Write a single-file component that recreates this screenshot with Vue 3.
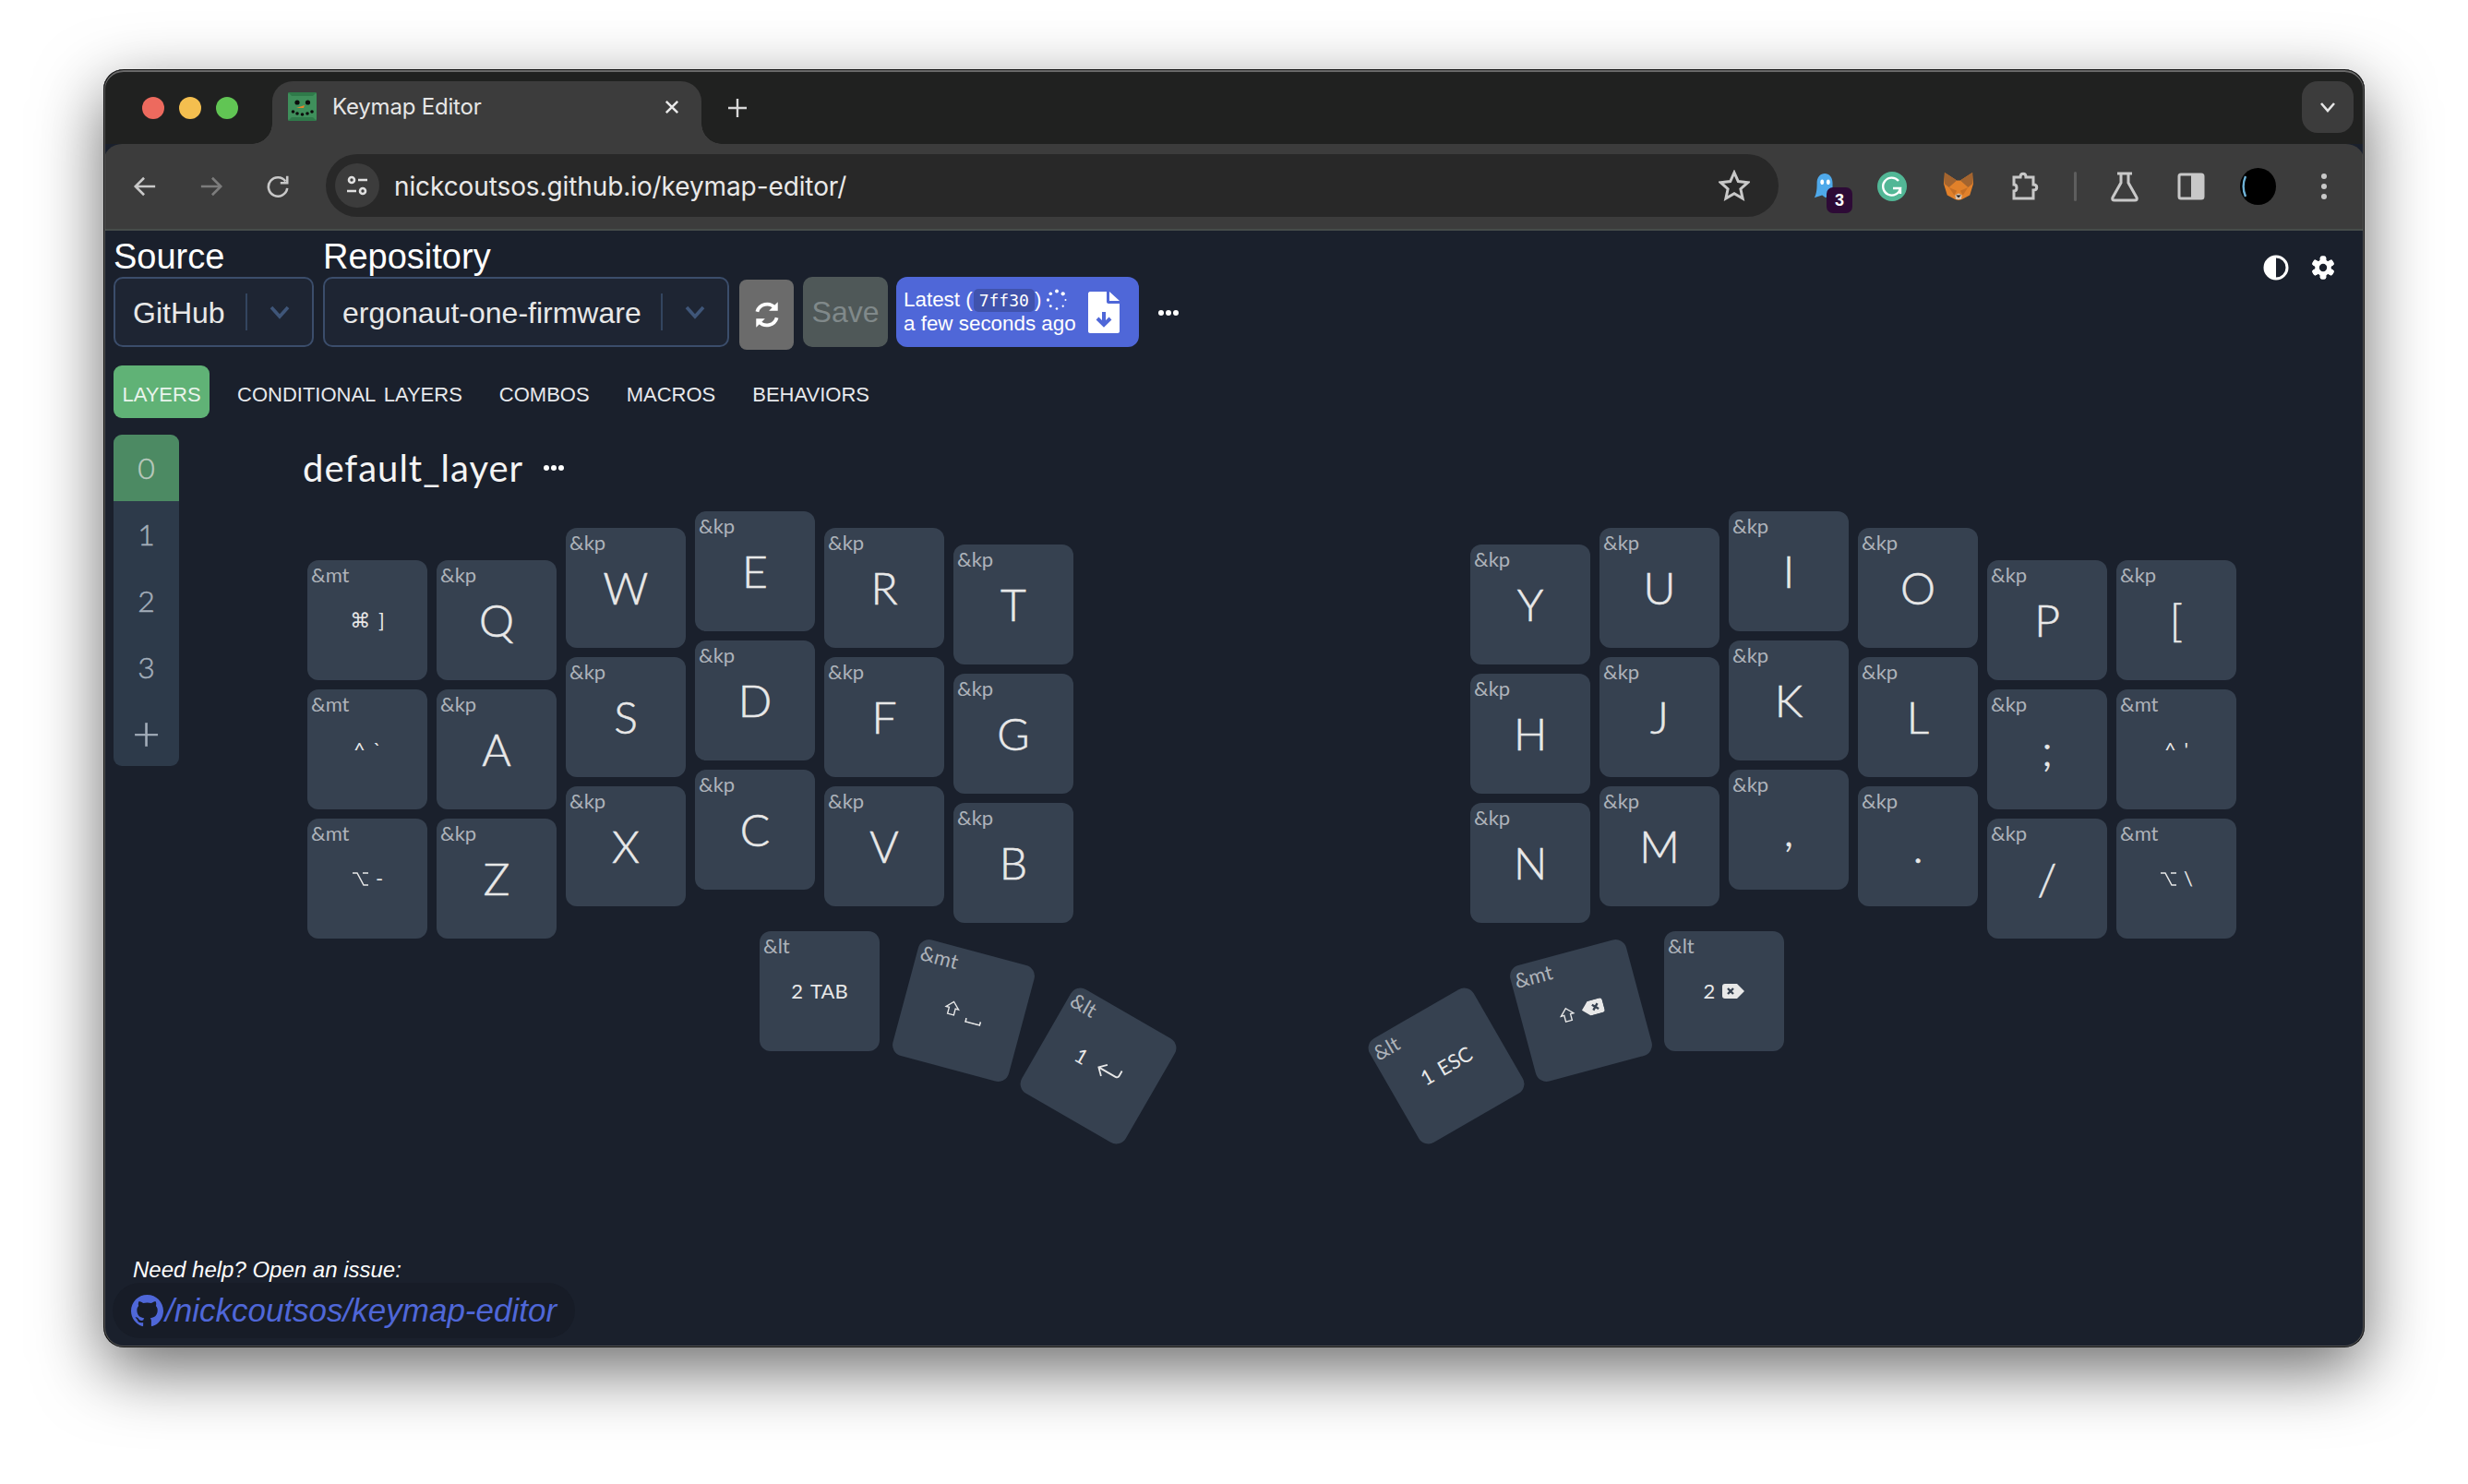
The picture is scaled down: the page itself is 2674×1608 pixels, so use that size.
<script setup>
const K = (x, y, legend, label, big = true, extra = {}) => ({ x, y, legend, label, big, rot: 0, icons: [], ...extra })
const keys = [
  K(333, 607, '&mt', '⌘ ]', false), K(473, 607, '&kp', 'Q'), K(613, 572, '&kp', 'W'), K(753, 554, '&kp', 'E'), K(893, 572, '&kp', 'R'), K(1033, 590, '&kp', 'T'),
  K(333, 747, '&mt', '^ `', false), K(473, 747, '&kp', 'A'), K(613, 712, '&kp', 'S'), K(753, 694, '&kp', 'D'), K(893, 712, '&kp', 'F'), K(1033, 730, '&kp', 'G'),
  K(333, 887, '&mt', '-', false, { icons: ['option'] }), K(473, 887, '&kp', 'Z'), K(613, 852, '&kp', 'X'), K(753, 834, '&kp', 'C'), K(893, 852, '&kp', 'V'), K(1033, 870, '&kp', 'B'),
  K(1593, 590, '&kp', 'Y'), K(1733, 572, '&kp', 'U'), K(1873, 554, '&kp', 'I'), K(2013, 572, '&kp', 'O'), K(2153, 607, '&kp', 'P'), K(2293, 607, '&kp', '['),
  K(1593, 730, '&kp', 'H'), K(1733, 712, '&kp', 'J'), K(1873, 694, '&kp', 'K'), K(2013, 712, '&kp', 'L'), K(2153, 747, '&kp', ';'), K(2293, 747, '&mt', '^ \'', false),
  K(1593, 870, '&kp', 'N'), K(1733, 852, '&kp', 'M'), K(1873, 834, '&kp', ','), K(2013, 852, '&kp', '.'), K(2153, 887, '&kp', '/'), K(2293, 887, '&mt', '\\', false, { icons: ['option'] }),
  K(823, 1009, '&lt', '2 TAB', false),
  K(979, 1029.5, '&mt', '', false, { rot: 15, icons: ['shift', 'space'] }),
  K(1125, 1089.5, '&lt', '1', false, { rot: 30, icons: ['enter'] }),
  K(1502, 1089.5, '&lt', '1 ESC', false, { rot: -30 }),
  K(1648, 1029.5, '&mt', '', false, { rot: -15, icons: ['shift', 'left'] }),
  K(1803, 1009, '&lt', '2', false, { icons: ['right'] }),
]
const ORIGIN_X = 333
const ORIGIN_Y = 554
const keyStyle = (k) => ({
  left: `${k.x - ORIGIN_X}px`,
  top: `${k.y - ORIGIN_Y}px`,
  transform: k.rot ? `rotate(${k.rot}deg)` : undefined,
})
const tabs = ['LAYERS', 'CONDITIONAL LAYERS', 'COMBOS', 'MACROS', 'BEHAVIORS']
const layers = ['0', '1', '2', '3', '+']
const teeth = [0, 60, 120, 180, 240, 300]
const spinner = [0, 1, 2, 3, 4, 5, 6, 7].map((i) => ({
  cx: 12 + 9.5 * Math.cos((i * Math.PI) / 4),
  cy: 12 + 9.5 * Math.sin((i * Math.PI) / 4),
  r: 1 + i * 0.16,
}))
</script>

<template>
  <div class="window">
    <header class="titlebar">
      <div class="lights">
        <span class="light red"></span>
        <span class="light yellow"></span>
        <span class="light green"></span>
      </div>
      <div class="tab">
        <svg class="favicon" viewBox="0 0 31 31">
          <rect width="31" height="31" rx="2" fill="#3f8f5b" />
          <path d="M0 0h31l-4 4H4zM0 31h31l-4-4H4z" fill="#2f7a4a" />
          <circle cx="10" cy="11" r="2.6" fill="#0c0c0c" />
          <circle cx="21.5" cy="11" r="2.6" fill="#0c0c0c" />
          <path d="M9 17l9-3-1 3z" fill="#e8842c" />
          <g fill="#0c0c0c">
            <circle cx="5.500" cy="21" r="1.800" /><circle cx="10" cy="23" r="1.800" /><circle cx="15.500" cy="24" r="1.800" />
            <circle cx="21" cy="23" r="1.800" /><circle cx="26" cy="21" r="1.800" />
          </g>
        </svg>
        <span class="tab-title">Keymap Editor</span>
        <svg class="tab-close" viewBox="0 0 16 16"><path d="M2.500 2.500l11 11M13.500 2.500l-11 11" /></svg>
      </div>
      <svg class="new-tab" viewBox="0 0 22 22"><path d="M11 1v20M1 11h20" /></svg>
      <div class="tab-menu">
        <svg viewBox="0 0 18 12"><path d="M2 2l7 8 7-8" /></svg>
      </div>
    </header>

    <nav class="toolbar">
      <span class="slot"><svg class="ti" viewBox="0 0 28 28"><path d="M26 14H4M13 4L3 14l10 10" /></svg></span>
      <span class="slot dim"><svg class="ti" viewBox="0 0 28 28"><path d="M2 14h22M15 4l10 10-10 10" /></svg></span>
      <span class="slot"><svg class="ti" viewBox="0 0 28 28"><path d="M23 8a11 11 0 1 0 2 8" /><path d="M25 2v8h-8" /></svg></span>
      <div class="omnibox">
        <span class="site-icon">
          <svg viewBox="0 0 24 24"><circle cx="6" cy="6" r="3" /><path d="M13 6h10M1 18h10" /><circle cx="18" cy="18" r="3" /></svg>
        </span>
        <span class="url">nickcoutsos.github.io/keymap-editor/</span>
        <svg class="star" viewBox="0 0 34 34"><path d="M17 3l4.300 9.600 10.400 1.100-7.800 7 2.200 10.300-9.100-5.300-9.100 5.300 2.200-10.300-7.800-7 10.400-1.100z" /></svg>
      </div>
      <span class="slot first">
        <svg class="ext" viewBox="0 0 34 34">
          <path d="M4 30c3-5 3-12 3-17C7 6 11 2 16 2s9 4 9 11v17l-4-3-4 3-4-3z" fill="#4fa9ea" />
          <ellipse cx="13" cy="12" rx="2" ry="3" fill="#fff" /><ellipse cx="20" cy="12" rx="2" ry="3" fill="#fff" />
        </svg>
        <b class="badge">3</b>
      </span>
      <span class="slot">
        <svg class="ext" viewBox="0 0 32 32">
          <circle cx="16" cy="16" r="16" fill="#52b796" />
          <path d="M23 10a9.500 9.500 0 1 0 2 8h-8M25 18v6" fill="none" stroke="#fff" stroke-width="2.400" />
        </svg>
      </span>
      <span class="slot">
        <svg class="ext" viewBox="0 0 34 32">
          <path d="M1 0l14 9h4l14-9 1 13-4 13-9 5-4 1-4-1-9-5-4-13z" fill="#e2812a" />
          <path d="M1 0l14 9-9 8-5-4zM33 0L19 9l9 8 5-4z" fill="#a3642f" />
          <path d="M13 26l4-2 4 2-1 5h-6z" fill="#d9c1ab" />
          <path d="M14 26h6l-3 3z" fill="#222" />
          <path d="M6 17l9 4-3 5zM28 17l-9 4 3 5z" fill="#c66f25" />
        </svg>
      </span>
      <span class="slot"><svg class="ti big" viewBox="0 0 34 34"><path d="M5 7h7c0-5 6-5 6 0h8v8c5 0 5 6 0 6v9H5v-8c4 0 4-7 0-7z" /></svg></span>
      <span class="sep"></span>
      <span class="slot"><svg class="ti big" viewBox="0 0 34 34"><path d="M9 3h16M13 3v10L4 29c-1 2 0 3 2 3h22c2 0 3-1 2-3l-9-16V3" /></svg></span>
      <span class="slot"><svg class="panel" viewBox="0 0 30 30"><rect x="2" y="2" width="26" height="26" rx="2" fill="none" stroke="#c8c8c8" stroke-width="3" /><rect x="15" y="2" width="13" height="26" fill="#c8c8c8" /></svg></span>
      <span class="slot">
        <svg class="avatar" viewBox="0 0 39 40">
          <ellipse cx="19.500" cy="20" rx="19.500" ry="20" fill="#000" />
          <path d="M6 9c-3 7-3 15 0 22" fill="none" stroke="#6fb2d6" stroke-width="2.400" />
        </svg>
      </span>
      <span class="slot"><span class="kebab"><i></i><i></i><i></i></span></span>
    </nav>

    <main class="content">
      <div class="top-row">
        <div class="field">
          <label class="field-label">Source</label>
          <div class="select source">
            <span class="select-value">GitHub</span>
            <span class="select-sep"></span>
            <svg class="select-arrow" viewBox="0 0 24 16"><path d="M3 3l9 10 9-10" /></svg>
          </div>
        </div>
        <div class="field">
          <label class="field-label">Repository</label>
          <div class="select repo">
            <span class="select-value">ergonaut-one-firmware</span>
            <span class="select-sep"></span>
            <svg class="select-arrow" viewBox="0 0 24 16"><path d="M3 3l9 10 9-10" /></svg>
          </div>
        </div>
        <button class="refresh">
          <svg viewBox="0 0 30 30"><path d="M5 12a10.500 10.500 0 0 1 18-4" /><path d="M25 18a10.500 10.500 0 0 1-18 4" /><path class="solid" d="M26 2v9h-9zM4 28v-9h9z" /></svg>
        </button>
        <button class="save">Save</button>
        <button class="latest">
          <span class="latest-text">
            <span class="latest-line">Latest (<code class="sha">7ff30</code>)<svg class="spin" viewBox="0 0 24 24"><circle v-for="(d, i) in spinner" :key="i" :cx="d.cx" :cy="d.cy" :r="d.r" fill="#fff" /></svg></span>
            <span class="latest-line">a few seconds ago</span>
          </span>
          <svg class="file" viewBox="0 0 34 45">
            <path d="M2 0h18v11c0 1 1 2 2 2h12v30c0 1-1 2-2 2H2c-1 0-2-1-2-2V2C0 1 1 0 2 0zM23 0l11 10H23z" fill="#fff" />
            <path d="M17 22v13M10 29l7 7 7-7" fill="none" stroke="#4f67d8" stroke-width="4" />
          </svg>
        </button>
        <span class="dots"><i></i><i></i><i></i></span>
        <span class="spacer"></span>
        <svg class="contrast" viewBox="0 0 28 28"><circle cx="14" cy="14" r="12" fill="none" stroke="#fff" stroke-width="3" /><path d="M14 2a12 12 0 0 0 0 24z" fill="#fff" /></svg>
        <svg class="gear" viewBox="0 0 28 28">
          <rect v-for="t in teeth" :key="t" x="10.500" y="0.500" width="7" height="27" rx="2.200" fill="#fff" :transform="`rotate(${t} 14 14)`" />
          <circle cx="14" cy="14" r="9.500" fill="#fff" /><circle cx="14" cy="14" r="4.500" fill="#1a202c" />
        </svg>
      </div>

      <div class="tabs">
        <span v-for="(t, i) in tabs" :key="t" class="nav-tab" :class="{ active: i === 0 }">{{ t }}</span>
      </div>

      <div class="main">
        <ul class="layers">
          <li v-for="(l, i) in layers" :key="l" :class="{ current: i === 0, add: l === '+' }">{{ l }}</li>
        </ul>
        <section class="stage">
          <div class="layer-title">
            <span class="layer-name">default_layer</span>
            <span class="dots title-dots"><i></i><i></i><i></i></span>
          </div>
          <div class="canvas">
            <div v-for="(k, i) in keys" :key="i" class="key" :style="keyStyle(k)">
              <span class="legend">{{ k.legend }}</span>
              <span class="cap" :class="{ big: k.big }">
                <svg v-if="k.icons[0] === 'option'" class="ic-option" viewBox="0 0 18 17"><path d="M1 2h5l7 13h5M12 2h6" fill="none" stroke="#e8e8e8" stroke-width="1.500" /></svg>
                <span v-if="k.label" class="cap-text">{{ k.label }}</span>
                <template v-for="ic in k.icons" :key="ic">
                  <svg v-if="ic === 'shift'" class="ic-shift" viewBox="0 0 17 17"><path d="M8.500 1.500L15.500 8.500H12V15.500H5V8.500H1.500Z" fill="none" stroke="#e8e8e8" stroke-width="1.400" /></svg>
                  <svg v-else-if="ic === 'space'" class="ic-space" viewBox="0 0 18 5"><path d="M1 0v4h16V0" fill="none" stroke="#e8e8e8" stroke-width="1.600" /></svg>
                  <svg v-else-if="ic === 'enter'" class="ic-enter" viewBox="0 0 28 18"><path d="M26 1v6c0 2-1 3-3 3H3M9 3l-7 7 7 7" fill="none" stroke="#e8e8e8" stroke-width="1.800" /></svg>
                  <svg v-else-if="ic === 'right'" class="bksp" viewBox="0 0 24 16"><path d="M3 0h13l8 8-8 8H3c-2 0-3-1-3-3V3c0-2 1-3 3-3z" fill="#e8e8e8" /><path d="M6 5l6 6M12 5l-6 6" stroke="#364150" stroke-width="2.400" /></svg>
                  <svg v-else-if="ic === 'left'" class="bksp" viewBox="0 0 24 16"><path d="M21 0H8L0 8l8 8h13c2 0 3-1 3-3V3c0-2-1-3-3-3z" fill="#e8e8e8" /><path d="M12 5l6 6M18 5l-6 6" stroke="#364150" stroke-width="2.400" /></svg>
                </template>
              </span>
            </div>
          </div>
        </section>
      </div>

      <footer class="foot">
        <p class="help">Need help? Open an issue:</p>
        <a class="repo-link">
          <svg viewBox="0 0 16 16"><path fill="#4f67d8" d="M8 0C3.580 0 0 3.580 0 8c0 3.540 2.290 6.530 5.470 7.590.4.070.55-.17.55-.38 0-.19-.01-.82-.01-1.490-2.010.37-2.530-.49-2.690-.94-.09-.23-.48-.94-.82-1.130-.28-.15-.68-.52-.01-.53.63-.01 1.080.58 1.230.82.72 1.210 1.870.87 2.330.66.07-.52.28-.87.51-1.070-1.780-.2-3.640-.89-3.640-3.950 0-.87.31-1.590.82-2.150-.08-.2-.36-1.020.08-2.120 0 0 .67-.21 2.200.82.64-.18 1.320-.27 2-.27.68 0 1.360.09 2 .27 1.530-1.040 2.200-.82 2.200-.82.44 1.100.16 1.920.08 2.120.51.56.82 1.270.82 2.150 0 3.070-1.870 3.750-3.650 3.950.29.25.54.73.54 1.480 0 1.070-.01 1.930-.01 2.200 0 .21.15.46.55.38A8.013 8.013 0 0016 8c0-4.420-3.580-8-8-8z" /></svg>
          <span class="repo-text">/nickcoutsos/keymap-editor</span>
        </a>
      </footer>
    </main>
  </div>
</template>

<style>
html, body { margin: 0; background: #fff; overflow: hidden; height: 1608px; }
</style>

<style scoped>
.window {
  position: relative;
  box-sizing: border-box;
  width: 2450px;
  height: 1385px;
  margin: 75px 0 0 112px;
  display: flex;
  flex-direction: column;
  border-radius: 22px;
  background: #1a202c;
  overflow: hidden;
  font-family: "Liberation Sans", Arial, sans-serif;
  color: #fff;
  box-shadow: 0 24px 72px rgba(0, 0, 0, 0.58);
}
.window::after {
  content: "";
  position: absolute;
  inset: 0;
  border-radius: 22px;
  box-shadow: inset 0 0 0 1px #111, inset 0 2px 0 1px #6a6a6a, inset 0 0 0 2px #555;
  pointer-events: none;
}
.titlebar {
  flex: none;
  height: 81px;
  box-sizing: border-box;
  padding-top: 13px;
  display: flex;
  align-items: flex-start;
  background: #202120;
}
.lights { display: flex; gap: 16px; padding: 17px 0 0 42px; width: 183px; box-sizing: border-box; }
.light { width: 24px; height: 24px; border-radius: 50%; }
.red { background: #ed6a5e; }
.yellow { background: #f4bf4f; }
.green { background: #61c554; }
.tab {
  position: relative;
  width: 465px;
  height: 68px;
  box-sizing: border-box;
  padding: 12px 23px 0 17px;
  display: flex;
  align-items: flex-start;
  background: #3c3c3c;
  border-radius: 22px 22px 0 0;
}
.tab::before, .tab::after {
  content: "";
  position: absolute;
  bottom: 0;
  width: 22px;
  height: 22px;
}
.tab::before { left: -22px; background: radial-gradient(circle at 0 0, #202120 21.5px, #3c3c3c 22px); }
.tab::after { right: -22px; background: radial-gradient(circle at 100% 0, #202120 21.5px, #3c3c3c 22px); }
.favicon { width: 31px; height: 31px; }
.tab-title {
  margin-left: 17px;
  font: 24px/32px Inter, "Liberation Sans", sans-serif;
  color: #e6e6e6;
  letter-spacing: -0.2px;
}
.tab-close { width: 18px; height: 18px; margin: 7px 0 0 auto; }
.tab-close path { stroke: #e8e8e8; stroke-width: 2.200; fill: none; }
.new-tab { width: 22px; height: 22px; margin: 18px 0 0 28px; }
.new-tab path { stroke: #d8d8d8; stroke-width: 2.400; fill: none; }
.tab-menu {
  margin-left: auto;
  margin-right: 12px;
  width: 56px;
  height: 56px;
  border-radius: 17px;
  background: #3c3c3c;
  display: flex;
  align-items: center;
  justify-content: center;
}
.tab-menu svg { width: 18px; height: 12px; }
.tab-menu path { stroke: #e6e6e6; stroke-width: 2.600; fill: none; }
.toolbar {
  flex: none;
  height: 94px;
  box-sizing: border-box;
  padding: 0 0 0 9px;
  display: flex;
  align-items: center;
  background: #3c3c3c;
  border-radius: 20px 20px 0 0;
  border-bottom: 2px solid #464c4a;
  position: relative;
}
.slot {
  position: relative;
  flex: none;
  width: 72px;
  height: 72px;
  display: flex;
  align-items: center;
  justify-content: center;
}
.slot.first { margin-left: 15px; }
.ti { width: 26px; height: 26px; fill: none; stroke: #c8c8c8; stroke-width: 2.800; }
.ti.big { width: 34px; height: 34px; stroke-width: 3; }
.dim .ti { stroke: #7c7c7c; }
.omnibox {
  flex: none;
  width: 1574px;
  height: 68px;
  margin-left: 16px;
  margin-top: -2px;
  box-sizing: border-box;
  padding: 0 14px 0 10px;
  display: flex;
  align-items: center;
  background: #282828;
  border-radius: 34px;
}
.site-icon {
  width: 48px;
  height: 48px;
  border-radius: 50%;
  background: #3c3c3c;
  display: flex;
  align-items: center;
  justify-content: center;
}
.site-icon svg { width: 24px; height: 24px; fill: none; stroke: #e0e0e0; stroke-width: 2.600; }
.url {
  margin: 2px 0 0 16px;
  font: 28px/40px Inter, "Liberation Sans", sans-serif;
  color: #e9e9e9;
  letter-spacing: -0.1px;
}
.star { width: 34px; height: 34px; margin: 0 17px 0 auto; fill: none; stroke: #c8c8c8; stroke-width: 3; }
.ext { width: 32px; height: 32px; }
.badge {
  position: absolute;
  left: 37px;
  top: 37px;
  width: 28px;
  height: 28px;
  border-radius: 7px;
  background: #2d0a36;
  font: bold 18px/28px "Liberation Sans", sans-serif;
  color: #fff;
  text-align: center;
}
.sep { flex: none; width: 3px; height: 32px; margin: 0 16px 0 17px; background: #5e5e5e; border-radius: 2px; }
.panel { width: 30px; height: 30px; }
.avatar { width: 39px; height: 40px; }
.kebab { display: flex; flex-direction: column; gap: 5px; }
.kebab i { width: 6px; height: 6px; border-radius: 50%; background: #c8c8c8; }
.content {
  flex: 1;
  min-height: 0;
  box-sizing: border-box;
  padding: 0 0 10px 11px;
  display: flex;
  flex-direction: column;
}
.top-row { display: flex; align-items: flex-end; gap: 11px; height: 126px; flex: none; }
.field { display: flex; flex-direction: column; }
.field + .field { margin-left: -1px; }
.field-label { font: 38px/50px "Liberation Sans", sans-serif; height: 50px; padding-top: 3px; box-sizing: border-box; }
.select {
  box-sizing: border-box;
  height: 76px;
  display: flex;
  align-items: center;
  padding: 2px 0 0 19px;
  border: 2px solid #3b4d6b;
  border-radius: 10px;
  background: #1e2533;
}
.source { width: 217px; }
.repo { width: 440px; }
.select-value { font: 32px/40px "Liberation Sans", sans-serif; color: #e8e8e8; white-space: nowrap; }
.select-sep { margin: -2px 0 0 auto; width: 2px; height: 40px; background: #33455f; }
.select-arrow { width: 24px; height: 16px; margin: -2px 23px 0 23px; fill: none; stroke: #3f5679; stroke-width: 3.600; }
.refresh {
  align-self: flex-end;
  width: 59px;
  height: 76px;
  margin-bottom: -3px;
  border: 0;
  border-radius: 8px;
  background: #6b6b6b;
  display: flex;
  align-items: center;
  justify-content: center;
  padding: 0;
}
.refresh svg { width: 32px; height: 32px; fill: none; stroke: #fff; stroke-width: 3.600; }
.refresh .solid { fill: #fff; stroke: none; }
.save {
  width: 92px;
  height: 76px;
  margin-left: -1px;
  border: 0;
  border-radius: 10px;
  background: #4f5858;
  color: #80898a;
  font: 32px/40px "Liberation Sans", sans-serif;
  padding: 0;
}
.latest {
  box-sizing: border-box;
  width: 263px;
  height: 76px;
  margin-left: -2px;
  padding: 0 21px 0 8px;
  border: 0;
  border-radius: 12px;
  background: #4f67d8;
  display: flex;
  align-items: center;
  justify-content: space-between;
  color: #fff;
}
.latest-text { display: flex; flex-direction: column; text-align: left; }
.latest-line {
  display: flex;
  align-items: center;
  height: 26px;
  white-space: pre;
  font: 22.4px/26px "Liberation Sans", sans-serif;
}
.sha {
  margin: 0 0 0 1px;
  padding: 0 6px;
  border-radius: 5px;
  background: #4053ad;
  font: 18px/25px "DejaVu Sans Mono", monospace;
}
.spin { width: 24px; height: 24px; margin-left: 5px; }
.file { width: 34px; height: 45px; }
.dots { display: flex; gap: 2px; align-self: center; }
.dots i { width: 6px; height: 6px; border-radius: 50%; background: #fff; }
.top-row > .dots { align-self: flex-start; margin: 86px 0 0 10px; }
.spacer { flex: 1; }
.contrast { align-self: flex-start; width: 28px; height: 28px; margin: 26px 13px 0 0; }
.gear { align-self: flex-start; width: 26px; height: 26px; margin: 27px 32px 0 0; }
.tabs { flex: none; display: flex; gap: 20px; margin-top: 20px; height: 57px; }
.nav-tab {
  box-sizing: border-box;
  height: 57px;
  padding: 5px 10px 0;
  font: 22px/54px "Liberation Sans", sans-serif;
  word-spacing: 3px;
  color: #e7e9ec;
  white-space: nowrap;
}
.nav-tab.active {
  width: 104px;
  padding: 5px 0 0;
  text-align: center;
  border-radius: 9px;
  background: #60b276;
  color: #e9f4ec;
}
.main { flex: none; display: flex; margin-top: 18px; }
.layers {
  flex: none;
  width: 71px;
  margin: 0;
  padding: 0;
  list-style: none;
  height: 359px;
  background: #2d3a4a;
  border-radius: 9px;
  overflow: hidden;
}
.layers li {
  height: 72px;
  font: 300 32px/72px Lato, sans-serif;
  -webkit-text-stroke: 0.5px currentColor;
  color: #a3adb9;
  text-align: center;
}
.layers li.current { background: #4c8a63; color: #b9c9be; }
.layers li.add { font-size: 52px; line-height: 68px; }
.stage { flex: 1; margin-left: 134px; position: relative; }
.layer-title { display: flex; align-items: center; height: 72px; }
.layer-name { font: 40px/72px Lato, sans-serif; letter-spacing: 1px; color: #f4f4f4; }
.title-dots { margin-left: 22px; }
.canvas { position: relative; margin: 11px 0 0 5px; height: 700px; }
.key {
  position: absolute;
  width: 130px;
  height: 130px;
  border-radius: 12px;
  background: #364150;
  display: flex;
  align-items: center;
  justify-content: center;
}
.legend {
  position: absolute;
  left: 4px;
  top: 1px;
  font: 22px/30px Lato, sans-serif;
  color: #aeb3ba;
}
.cap {
  display: flex;
  align-items: center;
  gap: 8px;
  font: 22px/30px Lato, "DejaVu Sans", sans-serif;
  color: #e8e8e8;
}
.cap-text { white-space: pre; word-spacing: 3px; }
.cap.big { font: 300 48px/50px Lato, "DejaVu Sans", sans-serif; -webkit-text-stroke: 0.6px currentColor; }
.bksp { width: 24px; height: 16px; }
.ic-option { width: 18px; height: 17px; }
.ic-shift { width: 17px; height: 17px; }
.ic-space { width: 18px; height: 5px; margin-top: 18px; }
.ic-enter { width: 28px; height: 18px; margin-left: 6px; }
.foot { margin-top: auto; flex: none; }
.help { margin: 0 0 -3px 21px; font: italic 24px/34px "Liberation Sans", sans-serif; color: #fff; }
.repo-link {
  box-sizing: border-box;
  width: 501px;
  height: 60px;
  margin-left: -1px;
  padding-left: 20px;
  display: flex;
  align-items: center;
  border-radius: 30px;
  background: #171c27;
  color: #4f67d8;
  font: italic 35px/40px "Liberation Sans", sans-serif;
}
.repo-link svg { width: 35px; height: 35px; flex: none; }
.repo-text { margin-left: 2px; }
</style>
